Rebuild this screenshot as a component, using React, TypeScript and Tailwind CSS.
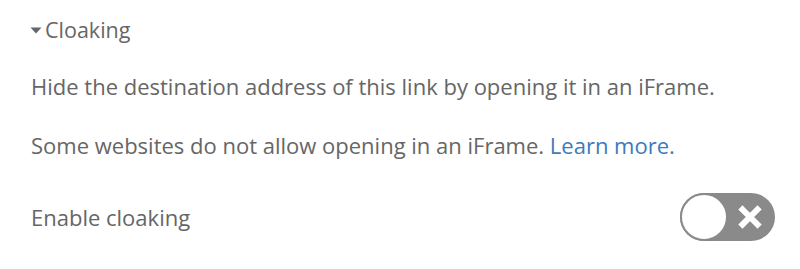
import { useState } from 'react';

export default function App() {
  const [enabled, setEnabled] = useState(false);

  return (
    <div className="w-[800px] h-[269px] bg-white pl-[31px] pr-[25px] text-[#666666] font-['Open_Sans',sans-serif]">
      {/* Section header */}
      <div className="flex items-center h-[58px] pt-[1px]">
        <svg width="12" height="8" viewBox="0 0 12 8" className="-ml-[1px] mr-[3px] mt-[1px]">
          <path d="M0.5 1.5h11L6 7.5z" fill="#666666" />
        </svg>
        <span className="text-[21.5px] leading-none">Cloaking</span>
      </div>

      <p className="text-[22px] leading-[30px] mt-[13px]">
        Hide the destination address of this link by opening it in an iFrame.
      </p>
      <p className="text-[22px] leading-[30px] mt-[29px]">
        Some websites do not allow opening in an iFrame.{' '}
        <a href="#" className="text-[#3a7cbd]">Learn more.</a>
      </p>

      {/* Toggle row */}
      <div className="flex items-center justify-between mt-[33px]">
        <span className="text-[22px] leading-[30px] -mt-[1px]">Enable cloaking</span>
        <button
          onClick={() => setEnabled(!enabled)}
          className="relative w-[95px] h-[48px] rounded-full bg-[#8a8a8a]"
        >
          <span className="absolute left-0 top-0 w-[48px] h-[48px] rounded-full bg-white border-2 border-[#8a8a8a]" />
          <svg width="24" height="24" viewBox="0 0 24 24" className="absolute left-[58px] top-[12px]">
            <path d="M4.5 4.5L19.5 19.5M19.5 4.5L4.5 19.5" stroke="#ffffff" strokeWidth="6" strokeLinecap="square" />
          </svg>
        </button>
      </div>
    </div>
  );
}
